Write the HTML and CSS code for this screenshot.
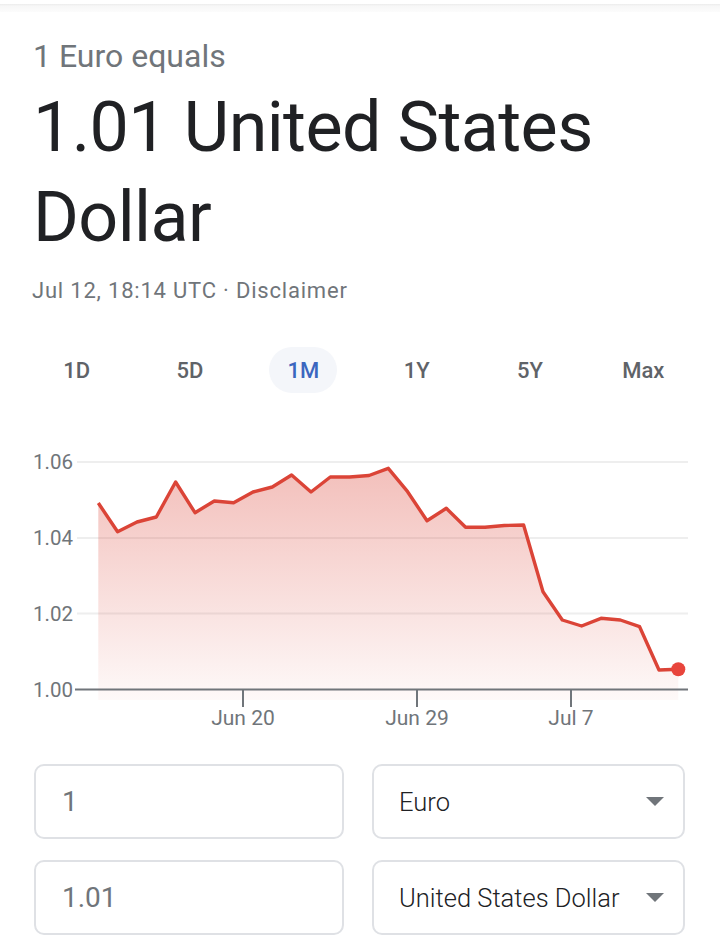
FILE: index.html
```html
<!DOCTYPE html>
<html lang="en">
<head>
  <meta charset="UTF-8" />
  <meta name="viewport" content="width=device-width, initial-scale=1.0" />
  <title>Euro to United States Dollar</title>
  <link rel="stylesheet" href="styles.css">
</head>
<body>
  <div class="top-edge"></div>
  <div class="card">
    <div class="label">1 Euro equals</div>
    <h1 class="result">1.01 United States Dollar</h1>
    <div class="meta">Jul 12, 18:14 UTC · <span class="link">Disclaimer</span></div>

    <div class="ranges">
      <button class="range">1D</button>
      <button class="range">5D</button>
      <button class="range active">1M</button>
      <button class="range">1Y</button>
      <button class="range">5Y</button>
      <button class="range">Max</button>
    </div>

    <svg class="chart" width="720" height="300" viewBox="0 0 720 300">
      <defs>
        <linearGradient id="area" x1="0" y1="28" x2="0" y2="262" gradientUnits="userSpaceOnUse">
          <stop offset="0" stop-color="#db4437" stop-opacity="0.34" />
          <stop offset="1" stop-color="#db4437" stop-opacity="0.03" />
        </linearGradient>
      </defs>

      <g class="grid">
        <line x1="77" y1="22" x2="688" y2="22" />
        <line x1="77" y1="98" x2="688" y2="98" />
        <line x1="77" y1="173.5" x2="688" y2="173.5" />
      </g>

      <g class="y-labels">
        <text x="33" y="29">1.06</text>
        <text x="33" y="105">1.04</text>
        <text x="33" y="181">1.02</text>
        <text x="33" y="257">1.00</text>
      </g>

      <polygon fill="url(#area)" points="98.3,63 117.6,91.7 137,82 156.3,77 175.6,42 195,72.7 214.3,61 233.6,62.7 253,52 272.3,47 291.6,35 311,52 330.3,37 349.6,37 369,35.5 388.3,28.3 407.6,51.7 427,80.7 446.3,68.3 465.6,87.3 485,87.3 504.3,85.5 523.6,85 543,151.7 562.3,180 581.6,186 601,178.3 620.3,180 639.6,186.7 659,230 678.3,229.3 678.3,260 98.3,260" />
      <polyline class="line" points="98.3,63 117.6,91.7 137,82 156.3,77 175.6,42 195,72.7 214.3,61 233.6,62.7 253,52 272.3,47 291.6,35 311,52 330.3,37 349.6,37 369,35.5 388.3,28.3 407.6,51.7 427,80.7 446.3,68.3 465.6,87.3 485,87.3 504.3,85.5 523.6,85 543,151.7 562.3,180 581.6,186 601,178.3 620.3,180 639.6,186.7 659,230 678.3,229.3" />
      <circle cx="678.3" cy="229.3" r="7" fill="#e8453c" />

      <g class="axis">
        <line x1="75" y1="249.5" x2="688" y2="249.5" />
        <line x1="243" y1="249" x2="243" y2="267" />
        <line x1="417" y1="249" x2="417" y2="267" />
        <line x1="571" y1="249" x2="571" y2="267" />
      </g>

      <g class="x-labels">
        <text x="243" y="285">Jun 20</text>
        <text x="417" y="285">Jun 29</text>
        <text x="571" y="285">Jul 7</text>
      </g>
    </svg>

    <div class="converter">
      <div class="field">1</div>
      <div class="select">Euro <span class="caret"></span></div>
      <div class="field">1.01</div>
      <div class="select">United States Dollar <span class="caret"></span></div>
    </div>
  </div>
</body>
</html>
```

FILE: styles.css
```css
body {
  margin: 0;
  background: #fff;
  font-family: Roboto, 'Noto Sans', Arial, sans-serif;
  color: #202124;
  overflow: hidden;
}
.top-edge {
  height: 12px;
  border-top: 4px solid #fff;
  box-sizing: border-box;
  background: linear-gradient(to bottom, #ececec 0, #f7f7f7 2px, #fff 12px);
}
.card {
  padding-top: 24px;
}
.label {
  padding-left: 33px;
  font-size: 32px;
  line-height: 40px;
  color: #70757a;
}
.result {
  margin: 6px 0 0;
  padding-left: 33px;
  padding-right: 20px;
  font-size: 70px;
  line-height: 90px;
  letter-spacing: -0.6px;
  font-weight: 400;
  color: #202124;
}
.meta {
  margin-top: 15px;
  padding-left: 32px;
  font-size: 22px;
  line-height: 28px;
  letter-spacing: 0.8px;
  color: #70757a;
}
.ranges {
  display: flex;
  margin-top: 42px;
  padding: 0 20px;
}
.range {
  flex: 1;
  display: flex;
  justify-content: center;
  align-items: center;
  height: 46px;
  border: none;
  background: none;
  padding: 0;
  font-family: inherit;
  font-size: 22px;
  font-weight: 500;
  color: #5f6368;
}
.range.active {
  color: #3b66bf;
  position: relative;
}
.range.active::before {
  content: '';
  position: absolute;
  left: 50%;
  top: 0;
  width: 68px;
  height: 46px;
  margin-left: -34px;
  border-radius: 23px;
  background: #f4f6fa;
  z-index: -1;
}
.chart {
  display: block;
  margin-top: 47px;
}
.grid line {
  stroke: #eeeeee;
  stroke-width: 2;
}
.y-labels text,
.x-labels text {
  font-family: Roboto, 'Noto Sans', Arial, sans-serif;
  font-size: 20.5px;
  fill: #70757a;
}
.x-labels text {
  text-anchor: middle;
  font-size: 21px;
}
.line {
  fill: none;
  stroke: #db4437;
  stroke-width: 3.4;
  stroke-linejoin: round;
}
.axis line {
  stroke: #70757a;
  stroke-width: 2;
}
.converter {
  display: grid;
  grid-template-columns: 310px 313px;
  gap: 21px 28px;
  margin-top: 24px;
  padding-left: 34px;
}
.field,
.select {
  display: flex;
  align-items: center;
  height: 75px;
  box-sizing: border-box;
  border: 2px solid #dfe1e5;
  border-radius: 10px;
}
.field {
  padding-left: 26px;
  font-size: 28px;
  color: #70757a;
}
.select {
  justify-content: space-between;
  padding: 0 19px 0 25px;
  font-size: 25.5px;
  font-weight: 300;
  color: #202124;
}
.caret {
  width: 0;
  height: 0;
  border-left: 9px solid transparent;
  border-right: 9px solid transparent;
  border-top: 9px solid #70757a;
}
```
